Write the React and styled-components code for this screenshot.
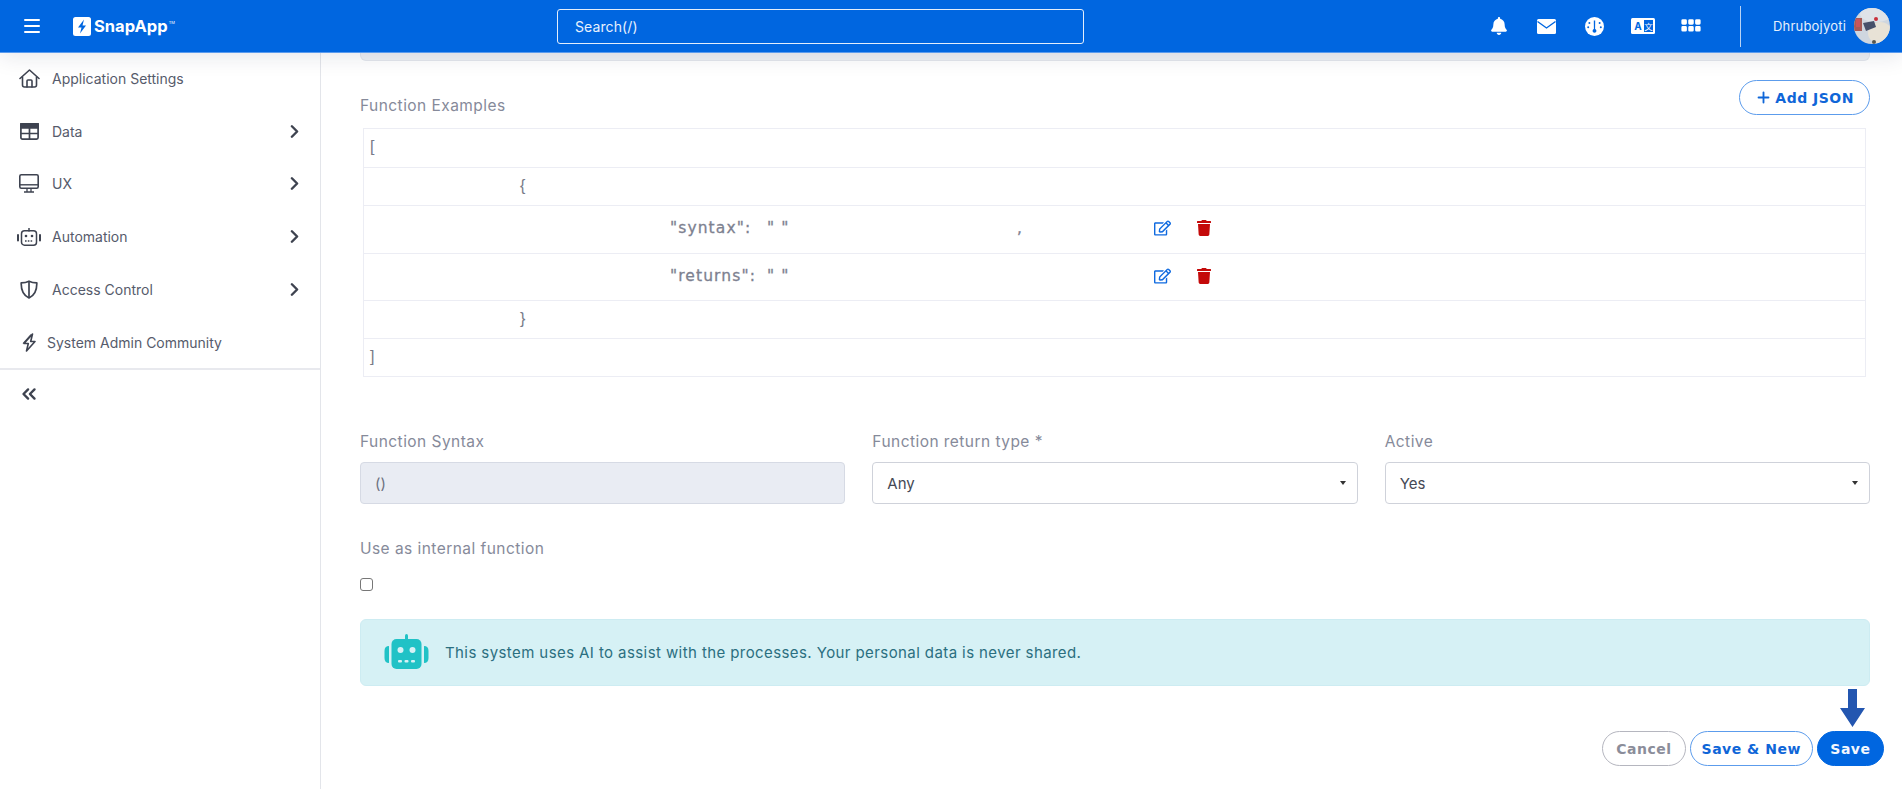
import React from 'react';
import styled, { createGlobalStyle } from 'styled-components';
import { FaBell, FaRegEdit, FaTrash } from 'react-icons/fa';
import { BsGrid3X2GapFill } from 'react-icons/bs';
import { LuChevronsLeft, LuChevronRight, LuPlus } from 'react-icons/lu';

const GlobalStyle = createGlobalStyle`
  html, body {
    margin: 0;
    height: 100%;
    overflow: hidden;
    background: #fff;
    font-family: Inter, "Liberation Sans", sans-serif;
  }
  * { box-sizing: border-box; }
`;

const Page = styled.div`
  height: 789px;
  display: flex;
  flex-direction: column;
`;
const Navbar = styled.header`
  height: 53px;
  flex: none;
  display: flex;
  align-items: center;
  background: #0066e0;
  border-bottom: 1px solid #5a9bee;
  box-shadow: 0 4px 22px rgba(20, 30, 60, 0.1);
  position: relative;
  z-index: 2;
  padding: 0 12px 0 24px;
`;
const Burger = styled.div`
  width: 16px;
  height: 14px;
  display: flex;
  flex-direction: column;
  justify-content: space-between;
  margin-right: 33px;
  span {
    display: block;
    height: 2px;
    border-radius: 1px;
    background: #fff;
  }
`;
const Logo = styled.div`
  width: 311px;
  height: 20px;
  display: flex;
  align-items: center;
  gap: 3px;
  color: #fff;
  font-size: 16.5px;
  font-weight: 700;
  margin-right: 173px;
  sup {
    font-size: 4px;
    font-weight: 400;
    align-self: flex-start;
    margin: 4px 0 0 -2px;
  }
`;
const SearchBox = styled.div`
  width: 527px;
  height: 35px;
  flex: none;
  border: 1px solid #e4eefc;
  border-radius: 3px;
  display: flex;
  align-items: center;
  padding-left: 17px;
  color: #e8f1fd;
  font-size: 14px;
  letter-spacing: 0.1px;
`;
const NavRight = styled.div`
  margin-left: auto;
  display: flex;
  align-items: center;
  color: #fff;
`;
const NavIcon = styled.span`
  width: 48px;
  display: flex;
  justify-content: center;
  align-items: center;
  color: #fff;
`;
const NavDivider = styled.div`
  width: 1px;
  height: 41px;
  background: #b8d3f5;
  margin: 0 32px 0 25px;
`;
const UserName = styled.span`
  font-size: 13px;
  color: #e6f0fc;
  margin-right: 8px;
  letter-spacing: 0.2px;
`;
const Avatar = styled.svg`
  width: 36px;
  height: 36px;
  border-radius: 50%;
  display: block;
`;
const Body = styled.div`
  flex: 1;
  display: flex;
  min-height: 0;
`;
const Sidebar = styled.aside`
  width: 321px;
  flex: none;
  border-right: 1px solid #e3e5ea;
`;
const SideList = styled.nav`
  border-bottom: 2px solid #e8e9ee;
  height: 318px;
  margin-top: -1px;
`;
const SideItem = styled.div`
  height: 52.75px;
  display: flex;
  align-items: center;
  padding: 0 15px 0 18px;
  color: #565b6b;
  font-size: 14px;
  svg { flex: none; color: #3e4350; }
`;
const SideIcon = styled.span`
  width: 22px;
  margin-right: ${({ $tight }) => ($tight ? 7 : 12)}px;
  display: flex;
  align-items: center;
  justify-content: center;
`;
const SideArrow = styled.span`
  margin-left: auto;
  display: flex;
`;
const Collapse = styled.div`
  padding: 13px 0 0 18px;
  color: #3e4350;
  display: flex;
`;
const Main = styled.main`
  flex: 1;
  min-width: 0;
  padding: 0 32px 0 39px;
`;
const TailCard = styled.div`
  height: 8px;
  background: #eef0f4;
  border: 1px solid #e3e6ec;
  border-top: none;
  border-radius: 0 0 6px 6px;
`;
const ExamplesHead = styled.div`
  height: 67px;
  display: flex;
  align-items: flex-start;
  justify-content: space-between;
  padding-top: 19px;
  > div { margin-top: 16px; }
`;
const Label = styled.div`
  color: #868a9a;
  font-size: 15.5px;
  letter-spacing: 0.45px;
`;
const PillButton = styled.button`
  height: 35px;
  padding: 0 ${({ $pad }) => $pad || 12}px;
  border-radius: 18px;
  font-family: "DejaVu Sans", sans-serif;
  font-size: 14px;
  font-weight: 700;
  letter-spacing: 0.5px;
  white-space: nowrap;
  display: flex;
  align-items: center;
  justify-content: center;
  gap: 3px;
  background: ${({ $variant }) => ($variant === 'solid' ? '#0066e0' : '#fff')};
  color: ${({ $variant }) => ({ solid: '#f2f7fe', muted: '#8b8d9a' }[$variant] || '#0f66d8')};
  border: 1.5px solid ${({ $variant }) => ({ solid: '#0066e0', muted: '#b5b6bf' }[$variant] || '#5c9cec')};
`;
const JsonTable = styled.div`
  margin: 0 4px 0 3px;
  border: 1.5px solid #ecedf4;
  color: #7d8190;
`;
const JsonRow = styled.div`
  height: ${({ $tall }) => ($tall ? 47.5 : 38)}px;
  display: grid;
  grid-template-columns: ${({ $indent }) => $indent}px 97px 250px 137px 43px 1fr;
  align-items: center;
  padding-bottom: 2px;
  border-top: ${({ $first }) => ($first ? 'none' : '1.5px solid #ecedf4')};
`;
const Bracket = styled.span`
  grid-column: 2;
  font-size: 16px;
  color: #777b88;
  font-family: "Liberation Sans", sans-serif;
`;
const JsonText = styled.span`
  grid-column: ${({ $col }) => $col};
  font-family: "DejaVu Sans", sans-serif;
  font-size: 15.5px;
  letter-spacing: 1.1px;
  -webkit-text-stroke: 0.3px #7d8190;
  white-space: nowrap;
`;
const EditIcon = styled(FaRegEdit)`
  grid-column: 5;
  color: #0f6ae0;
  width: 17px;
  height: 16px;
`;
const TrashIcon = styled(FaTrash)`
  grid-column: 6;
  color: #c40a0a;
  width: 14px;
  height: 16px;
`;
const FormRow = styled.div`
  display: grid;
  grid-template-columns: repeat(3, 1fr);
  gap: 27px;
  margin-top: 55px;
`;
const Field = styled.div`
  display: flex;
  flex-direction: column;
  gap: 11px;
`;
const Control = styled.div`
  height: 42px;
  border: 1px solid ${({ $disabled }) => ($disabled ? '#d6dae4' : '#cfd2da')};
  border-radius: 4px;
  background: ${({ $disabled }) => ($disabled ? '#e9ecf3' : '#fff')};
  color: ${({ $disabled }) => ($disabled ? '#6d7180' : '#454955')};
  font-size: 15px;
  display: flex;
  align-items: center;
  justify-content: space-between;
  padding: 0 11px 0 14px;
`;
const Caret = styled.span`
  width: 0;
  height: 0;
  border-left: 3.5px solid transparent;
  border-right: 3.5px solid transparent;
  border-top: 4px solid #333;
`;
const InternalField = styled.div`
  margin-top: 35px;
`;
const Checkbox = styled.div`
  width: 13px;
  height: 13px;
  margin-top: 20px;
  border: 1.5px solid #777;
  border-radius: 3px;
  background: #fff;
`;
const Alert = styled.div`
  height: 67px;
  margin-top: 28px;
  padding: 0 0 1px 23px;
  background: #d6f1f5;
  border: 1px solid #cdecf2;
  border-radius: 6px;
  display: flex;
  align-items: center;
  gap: 16px;
  color: #2b6f80;
  font-size: 15px;
  letter-spacing: 0.41px;
`;
const Actions = styled.div`
  display: flex;
  justify-content: flex-end;
  gap: 4px;
  margin: 45px -14px 0 0;
  position: relative;
`;
const PointerArrow = styled.svg`
  position: absolute;
  right: 19px;
  top: -42px;
  width: 25px;
  height: 38px;
`;

function HomeIcon() {
  return (
    <svg width="21" height="19" viewBox="0 0 21 19" fill="none" stroke="currentColor" strokeWidth="1.6" strokeLinejoin="round" strokeLinecap="round">
      <path d="M1 9.5 L10.5 1 L20 9.5" />
      <path d="M3.5 8 V16 Q3.5 18 5.5 18 H15.5 Q17.5 18 17.5 16 V8" />
      <path d="M8 18 V12 Q8 11 9 11 H12 Q13 11 13 12 V18" />
    </svg>
  );
}

function TableIcon() {
  return (
    <svg width="19" height="17" viewBox="0 0 19 17" fill="none" stroke="currentColor" strokeWidth="1.7">
      <rect x="0.9" y="0.9" width="17.2" height="15.2" rx="1.5" />
      <rect x="0.9" y="0.9" width="17.2" height="4" fill="currentColor" />
      <path d="M0.9 10.5H18.1M9.5 4.9V16.1" />
    </svg>
  );
}

function MonitorIcon() {
  return (
    <svg width="20" height="19" viewBox="0 0 20 19" fill="none" stroke="currentColor" strokeWidth="1.6">
      <rect x="0.8" y="0.8" width="18.4" height="13.4" rx="1.5" />
      <path d="M0.8 10.8H19.2" strokeWidth="1.4" />
      <path d="M8 14.5 V17.5 M12 14.5 V17.5 M5 18H15" strokeWidth="1.3" />
    </svg>
  );
}

function RobotOutline() {
  return (
    <svg width="24" height="18" viewBox="0 0 24 18" fill="none" stroke="currentColor" strokeWidth="1.5">
      <path d="M12 0v3" strokeLinecap="round" />
      <rect x="4.5" y="2.8" width="15" height="14.4" rx="3" />
      <path d="M1 7v5.5M23 7v5.5" strokeWidth="2" strokeLinecap="round" />
      <circle cx="9" cy="8" r="1.3" fill="currentColor" stroke="none" />
      <circle cx="15" cy="8" r="1.3" fill="currentColor" stroke="none" />
      <path d="M8 13h8" strokeDasharray="1.6 1.2" strokeWidth="1.3" />
    </svg>
  );
}

function ShieldHalf() {
  return (
    <svg width="18" height="19" viewBox="0 0 18 19" fill="none" stroke="currentColor" strokeWidth="1.7" strokeLinejoin="round">
      <path d="M9 1.2 C6.5 2.4 4 2.8 1.2 2.8 C1 9 2.5 15 9 18 C15.5 15 17 9 16.8 2.8 C14 2.8 11.5 2.4 9 1.2 Z" />
      <path d="M9 1.5V17.5" />
    </svg>
  );
}

function BoltIcon() {
  return (
    <svg width="15" height="19" viewBox="0 0 15 19" fill="none" stroke="currentColor" strokeWidth="1.6" strokeLinejoin="round">
      <path d="M10.5 1 L2 10.5 H6.3 L4.5 18 L13 8.5 H8.7 Z" />
      <path d="M1 10.5 L9 1.5" strokeWidth="1.1" />
    </svg>
  );
}

const NAV_ITEMS = [
  { label: 'Application Settings', icon: <HomeIcon /> },
  { label: 'Data', icon: <TableIcon />, arrow: true },
  { label: 'UX', icon: <MonitorIcon />, arrow: true },
  { label: 'Automation', icon: <RobotOutline />, arrow: true },
  { label: 'Access Control', icon: <ShieldHalf />, arrow: true },
  { label: 'System Admin Community', icon: <BoltIcon />, tight: true },
];

function LogoMark() {
  return (
    <svg width="18" height="19" viewBox="0 0 18 19">
      <rect width="18" height="19" rx="2.5" fill="#fff" />
      <path d="M11 2.5 L5 10.5 H8.5 L7 16.5 L13 8.5 H9.5 Z" fill="#0066e0" />
    </svg>
  );
}

function MailIcon() {
  return (
    <svg width="19" height="15" viewBox="0 0 19 15">
      <rect width="19" height="15" rx="1.5" fill="#fff" />
      <path d="M0.5 2.5 L9.5 9 L18.5 2.5" fill="none" stroke="#0066e0" strokeWidth="1.4" />
    </svg>
  );
}

function GaugeIcon() {
  return (
    <svg width="19" height="19" viewBox="0 0 19 19">
      <circle cx="9.5" cy="9.5" r="9.5" fill="#fff" />
      <path d="M8.8 3.5h1.4l-.1 8.5a1.9 1.9 0 1 1-1.2 0z" fill="#0066e0" />
      <circle cx="4.4" cy="6" r="1" fill="#0066e0" />
      <circle cx="14.6" cy="6" r="1" fill="#0066e0" />
      <circle cx="3.2" cy="10.2" r="1" fill="#0066e0" />
      <circle cx="15.8" cy="10.2" r="1" fill="#0066e0" />
    </svg>
  );
}

function TranslateIcon() {
  return (
    <svg width="24" height="16" viewBox="0 0 24 16">
      <rect width="24" height="16" rx="1.5" fill="#fff" />
      <rect x="13" y="2" width="9" height="12" fill="#0066e0" />
      <text x="7" y="12" textAnchor="middle" fontSize="10" fontWeight="700" fontFamily="Inter, sans-serif" fill="#0066e0">A</text>
      <text x="17.5" y="12" textAnchor="middle" fontSize="8.5" fontFamily="'Noto Sans CJK SC', sans-serif" fill="#fff">文</text>
    </svg>
  );
}

function AvatarPhoto() {
  return (
    <Avatar viewBox="0 0 36 36">
      <rect width="36" height="36" fill="#cfd6df" />
      <ellipse cx="22" cy="6" rx="16" ry="8" fill="#dfe3e8" />
      <ellipse cx="26" cy="25" rx="12" ry="11" fill="#e8e2d6" />
      <rect x="0" y="10" width="8" height="13" fill="#a85a55" />
      <rect x="2" y="11" width="4" height="8" fill="#c9555a" />
      <path d="M9 15 L20 13 L22 19 L12 23 Z" fill="#46506a" />
      <circle cx="22" cy="11" r="2" fill="#c9303c" />
      <circle cx="20" cy="34" r="2" fill="#55564e" />
    </Avatar>
  );
}

function TealRobot() {
  return (
    <svg width="45" height="36" viewBox="0 0 45 36">
      <rect x="21" y="0" width="3" height="6" rx="1.5" fill="#20c2c6" />
      <rect x="7.5" y="5" width="30" height="30" rx="5" fill="#20c2c6" />
      <path d="M5 12 Q0.5 12 0.5 17 V24 Q0.5 29 5 29 Z" fill="#20c2c6" />
      <path d="M40 12 Q44.5 12 44.5 17 V24 Q44.5 29 40 29 Z" fill="#20c2c6" />
      <circle cx="16.5" cy="16" r="3" fill="#d6f1f5" />
      <circle cx="28.5" cy="16" r="3" fill="#d6f1f5" />
      <rect x="14" y="26" width="4" height="2.4" rx="1" fill="#d6f1f5" />
      <rect x="20.5" y="26" width="4" height="2.4" rx="1" fill="#d6f1f5" />
      <rect x="27" y="26" width="4" height="2.4" rx="1" fill="#d6f1f5" />
    </svg>
  );
}

function App() {
  return (
    <Page>
      <GlobalStyle />
      <Navbar>
        <Burger><span /><span /><span /></Burger>
        <Logo>
          <LogoMark />
          SnapApp<sup>TM</sup>
        </Logo>
        <SearchBox>Search(/)</SearchBox>
        <NavRight>
          <NavIcon><FaBell size={18} /></NavIcon>
          <NavIcon><MailIcon /></NavIcon>
          <NavIcon><GaugeIcon /></NavIcon>
          <NavIcon><TranslateIcon /></NavIcon>
          <NavIcon><BsGrid3X2GapFill size={22} /></NavIcon>
          <NavDivider />
          <UserName>Dhrubojyoti</UserName>
          <AvatarPhoto />
        </NavRight>
      </Navbar>
      <Body>
        <Sidebar>
          <SideList>
            {NAV_ITEMS.map((item) => (
              <SideItem key={item.label}>
                <SideIcon $tight={item.tight}>{item.icon}</SideIcon>
                {item.label}
                {item.arrow && <SideArrow><LuChevronRight size={21} strokeWidth={2.8} /></SideArrow>}
              </SideItem>
            ))}
          </SideList>
          <Collapse><LuChevronsLeft size={22} strokeWidth={2.6} /></Collapse>
        </Sidebar>
        <Main>
          <TailCard />
          <ExamplesHead>
            <Label>Function Examples</Label>
            <PillButton $pad={15}><LuPlus size={17} strokeWidth={2.6} />Add JSON</PillButton>
          </ExamplesHead>
          <JsonTable>
            <JsonRow $first $indent={6}><Bracket>[</Bracket></JsonRow>
            <JsonRow $indent={156}><Bracket>{'{'}</Bracket></JsonRow>
            <JsonRow $tall $indent={306}>
              <JsonText $col={2}>"syntax":</JsonText>
              <JsonText $col={3}>" "</JsonText>
              <JsonText $col={4}>,</JsonText>
              <EditIcon />
              <TrashIcon />
            </JsonRow>
            <JsonRow $tall $indent={306}>
              <JsonText $col={2}>"returns":</JsonText>
              <JsonText $col={3}>" "</JsonText>
              <EditIcon />
              <TrashIcon />
            </JsonRow>
            <JsonRow $indent={156}><Bracket>{'}'}</Bracket></JsonRow>
            <JsonRow $indent={6}><Bracket>]</Bracket></JsonRow>
          </JsonTable>
          <FormRow>
            <Field>
              <Label>Function Syntax</Label>
              <Control $disabled>()</Control>
            </Field>
            <Field>
              <Label>Function return type *</Label>
              <Control>Any<Caret /></Control>
            </Field>
            <Field>
              <Label>Active</Label>
              <Control>Yes<Caret /></Control>
            </Field>
          </FormRow>
          <InternalField>
            <Label>Use as internal function</Label>
            <Checkbox />
          </InternalField>
          <Alert>
            <TealRobot />
            This system uses AI to assist with the processes. Your personal data is never shared.
          </Alert>
          <Actions>
            <PointerArrow viewBox="0 0 25 38">
              <path d="M8 0h9v19h8L12.5 38 0 19h8z" fill="#2356b0" />
            </PointerArrow>
            <PillButton $variant="muted" $pad={13}>Cancel</PillButton>
            <PillButton $pad={11}>Save &amp; New</PillButton>
            <PillButton $variant="solid" $pad={12.5}>Save</PillButton>
          </Actions>
        </Main>
      </Body>
    </Page>
  );
}

export default App;
